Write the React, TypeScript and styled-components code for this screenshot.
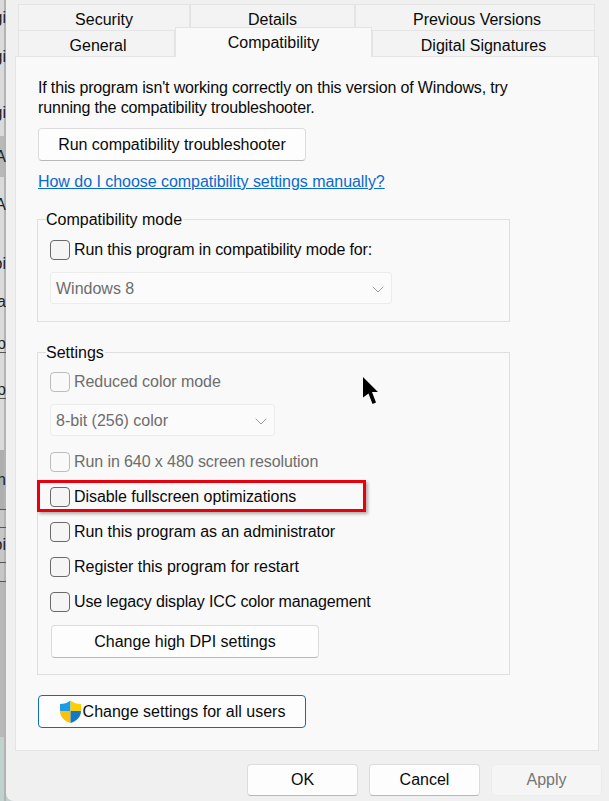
import React from "react";
import styled, { createGlobalStyle } from "styled-components";

const Global = createGlobalStyle`
  html, body { margin: 0; padding: 0; background: #f0f0f0; }
  body { width: 609px; height: 801px; overflow: hidden; font-family: "Liberation Sans", Arial, sans-serif; font-size: 16px; color: #0a0a0a; }
`;

const Screen = styled.div`
  display: flex;
  width: 609px;
  height: 801px;
  overflow: hidden;
  position: relative;
  background: #bfd2cd;
`;

const Behind = styled.div`
  width: 6px;
  flex: none;
  overflow: hidden;
  display: flex;
  flex-direction: column;
`;

const BehindRow = styled.div<{ $h: number; $bg?: string; $line?: boolean }>`
  height: ${(p) => p.$h}px;
  flex: none;
  background: linear-gradient(to right, ${(p) => p.$bg || "#dadada"} 4px, #b3b3b3 4px);
  box-sizing: border-box;
  border-bottom: ${(p) => (p.$line ? "1px solid #555" : "none")};
  display: flex;
  justify-content: flex-end;
  align-items: center;
  font-size: 16px;
  white-space: nowrap;
  color: #222;
`;

const Dialog = styled.div`
  flex: 1;
  min-width: 0;
  padding: 4px 10px 0 9px;
  border-bottom-left-radius: 8px;
  background: #f0f0f0;
  display: flex;
  flex-direction: column;
`;

const TabRow = styled.div`
  display: flex;
  height: 26px;
  margin: 0 4px 0 3px;
`;

const Tab = styled.div<{ $w: number; $active?: boolean; $shift?: number }>`
  width: ${(p) => p.$w}px;
  box-sizing: border-box;
  flex: none;
  display: flex;
  align-items: center;
  justify-content: center;
  background: ${(p) => (p.$active ? "#f9f9f9" : "#f3f3f3")};
  border: 1px solid #e4e4e4;
  border-bottom: none;
  margin-top: ${(p) => (p.$active ? "-3px" : "0")};
  padding-top: ${(p) => (p.$active ? "0" : "4px")};
  padding-left: ${(p) => p.$shift ?? 0}px;
  height: ${(p) => (p.$active ? "30px" : "26px")};
  position: relative;
  z-index: ${(p) => (p.$active ? 2 : 1)};
`;

const Panel = styled.div`
  box-sizing: border-box;
  height: 695px;
  background: #f9f9f9;
  border: 1px solid #e4e4e4;
  padding: 21px 22px 0 22px;
  display: flex;
  flex-direction: column;
  align-items: flex-start;
`;

const Intro = styled.p`
  margin: 0;
  line-height: 20px;
  width: 500px;
  letter-spacing: -0.155px;
`;

const Btn = styled.div<{ $w?: number; $blue?: boolean }>`
  width: ${(p) => p.$w ?? 268}px;
  height: 33px;
  box-sizing: border-box;
  flex: none;
  display: flex;
  align-items: center;
  justify-content: center;
  background: #fdfdfd;
  border: 1px solid ${(p) => (p.$blue ? "#0f6cbd" : "#dcdcdc")};
  border-bottom-color: ${(p) => (p.$blue ? "#0f6cbd" : "#b8b8b8")};
  border-radius: 4px;
`;

const TroubleBtn = styled(Btn)`
  margin-top: 10px;
  letter-spacing: -0.03px;
`;

const HelpLink = styled.a`
  margin-top: 11px;
  line-height: 20px;
  color: #0a69d0;
  text-decoration: underline;
  letter-spacing: -0.04px;
`;

const Group = styled.div<{ $h: number; $top: number }>`
  box-sizing: border-box;
  margin: ${(p) => p.$top}px 0 0 -1px;
  width: 473px;
  height: ${(p) => p.$h}px;
  border: 1px solid #dfdfdf;
  padding: 0 12px;
  display: flex;
  flex-direction: column;
  align-items: flex-start;
`;

const Legend = styled.div`
  margin: -10px 0 0 -4px;
  padding: 0 1px 0 0;
  line-height: 20px;
  background: #f9f9f9;
`;

const CheckRow = styled.div<{ $off?: boolean; $mark?: boolean; $gap?: number; $ls?: number }>`
  display: flex;
  align-items: center;
  gap: 4px;
  height: 20px;
  flex: none;
  position: relative;
  color: ${(p) => (p.$off ? "#6d6d6d" : "#0a0a0a")};
  margin-top: ${(p) => p.$gap ?? 15}px;
  letter-spacing: ${(p) => p.$ls ?? 0}px;
  ${(p) =>
    p.$mark
      ? `&::after {
          content: "";
          position: absolute;
          left: -13px;
          top: -7px;
          width: 329px;
          height: 32px;
          box-sizing: border-box;
          border: 3px solid #e8000c;
          box-shadow: 2px 2px 3px rgba(0,0,0,.3);
          pointer-events: none;
        }`
      : ""}
`;

const Box = styled.span<{ $off?: boolean }>`
  width: 20px;
  height: 20px;
  flex: none;
  box-sizing: border-box;
  background: ${(p) => (p.$off ? "#f9f9f9" : "#f5f5f5")};
  border: 1px solid ${(p) => (p.$off ? "#bdbdbd" : "#6a6a6a")};
  border-radius: 4px;
`;

const Select = styled.div<{ $w: number; $top: number }>`
  box-sizing: border-box;
  width: ${(p) => p.$w}px;
  height: 32px;
  margin-top: ${(p) => p.$top}px;
  padding: 2px 7px 0 5px;
  flex: none;
  display: flex;
  align-items: center;
  justify-content: space-between;
  background: #fbfbfb;
  border: 1px solid #ececec;
  border-radius: 3px;
  color: #6d6d6d;
`;

const Chevron = () => (
  <svg width="12" height="7" viewBox="0 0 12 7" fill="none">
    <path d="M.7.7 6 6 11.3.7" stroke="#9a9a9a" strokeWidth="1" />
  </svg>
);

const DpiBtn = styled(Btn)`
  margin: 13px 0 0 1px;
`;

const AllUsersBtn = styled(Btn)`
  margin-top: 20px;
  gap: 1px;
`;

const Footer = styled.div`
  display: flex;
  gap: 11px;
  margin: 13px -2px 0 232px;
`;

const FootBtn = styled(Btn)<{ $off?: boolean }>`
  height: 32px;
  color: ${(p) => (p.$off ? "#767676" : "#0a0a0a")};
  background: ${(p) => (p.$off ? "#f5f5f5" : "#fdfdfd")};
  border-color: ${(p) => (p.$off ? "#ececec" : "#dcdcdc")};
  border-bottom-color: ${(p) => (p.$off ? "#ececec" : "#b8b8b8")};
`;

const PointerLayer = styled.svg`
  position: absolute;
  left: 363px;
  top: 377px;
`;

const Shield = () => (
  <svg width="23" height="23" viewBox="0 0 23 23">
    <path d="M11.5 0.5C8.5 3 5 4 1 4v7h10.5V0.5Z" fill="#1c9be6" />
    <path d="M11.5 0.5C14.5 3 18 4 22 4v7H11.5V0.5Z" fill="#ffce00" />
    <path d="M1 11c0 6 4.5 10 10.5 12V11H1Z" fill="#ffc107" />
    <path d="M22 11c0 6-4.5 10-10.500 12V11H22Z" fill="#1179c8" />
  </svg>
);

export default function App() {
  return (
    <>
      <Global />
      <Screen>
        <Behind>
          <BehindRow $h={36}>gi</BehindRow>
          <BehindRow $h={42}>gi</BehindRow>
          <BehindRow $h={15} />
          <BehindRow $h={40}>gi</BehindRow>
          <BehindRow $h={3} />
          <BehindRow $h={41} $bg="#b8b8b8">A</BehindRow>
          <BehindRow $h={56}>A</BehindRow>
          <BehindRow $h={62}>oi</BehindRow>
          <BehindRow $h={14}>za</BehindRow>
          <BehindRow $h={26} />
          <BehindRow $h={18} $line>p</BehindRow>
          <BehindRow $h={28} />
          <BehindRow $h={18} $line>p</BehindRow>
          <BehindRow $h={51} />
          <BehindRow $h={60} $bg="#aeaeae" $line>h</BehindRow>
          <BehindRow $h={18} $bg="#c6c6c6" $line />
          <BehindRow $h={35} $bg="#c6c6c6" $line>oi</BehindRow>
          <BehindRow $h={19} $bg="#c6c6c6" $line />
          <BehindRow $h={155} $bg="#b8b8b8" />
          <BehindRow $h={64} $bg="#bfd2cd" />
        </Behind>
        <Dialog>
          <TabRow>
            <Tab $w={172}>Security</Tab>
            <Tab $w={165}>Details</Tab>
            <Tab $w={240} $shift={4}>Previous Versions</Tab>
          </TabRow>
          <TabRow>
            <Tab $w={157} $shift={3}>General</Tab>
            <Tab $w={197} $active>Compatibility</Tab>
            <Tab $w={223}>Digital Signatures</Tab>
          </TabRow>
          <Panel>
            <Intro>
              If this program isn't working correctly on this version of Windows, try running the compatibility troubleshooter.
            </Intro>
            <TroubleBtn>Run compatibility troubleshooter</TroubleBtn>
            <HelpLink>How do I choose compatibility settings manually?</HelpLink>
            <Group $h={103} $top={27}>
              <Legend>Compatibility mode</Legend>
              <CheckRow $gap={10} $ls={-0.14}>
                <Box />
                Run this program in compatibility mode for:
              </CheckRow>
              <Select $w={342} $top={12}>
                Windows 8
                <Chevron />
              </Select>
            </Group>
            <Group $h={323} $top={30}>
              <Legend>Settings</Legend>
              <CheckRow $off $gap={9} $ls={-0.05}>
                <Box $off />
                Reduced color mode
              </CheckRow>
              <Select $w={225} $top={12}>
                8-bit (256) color
                <Chevron />
              </Select>
              <CheckRow $off $gap={16} $ls={-0.09}>
                <Box $off />
                Run in 640 x 480 screen resolution
              </CheckRow>
              <CheckRow $mark $ls={-0.06}>
                <Box />
                Disable fullscreen optimizations
              </CheckRow>
              <CheckRow $ls={-0.06}>
                <Box />
                Run this program as an administrator
              </CheckRow>
              <CheckRow $ls={-0.03}>
                <Box />
                Register this program for restart
              </CheckRow>
              <CheckRow $ls={-0.15}>
                <Box />
                Use legacy display ICC color management
              </CheckRow>
              <DpiBtn>Change high DPI settings</DpiBtn>
            </Group>
            <AllUsersBtn $blue>
              <Shield />
              Change settings for all users
            </AllUsersBtn>
          </Panel>
          <Footer>
            <FootBtn $w={111}>OK</FootBtn>
            <FootBtn $w={111}>Cancel</FootBtn>
            <FootBtn $w={111} $off>Apply</FootBtn>
          </Footer>
        </Dialog>
        <PointerLayer width="16" height="28" viewBox="0 0 16 28">
          <path d="M0 0 15 15H9L13 25.500 9.500 27 5.500 16.500 0 20.500Z" fill="#000" />
        </PointerLayer>
      </Screen>
    </>
  );
}
